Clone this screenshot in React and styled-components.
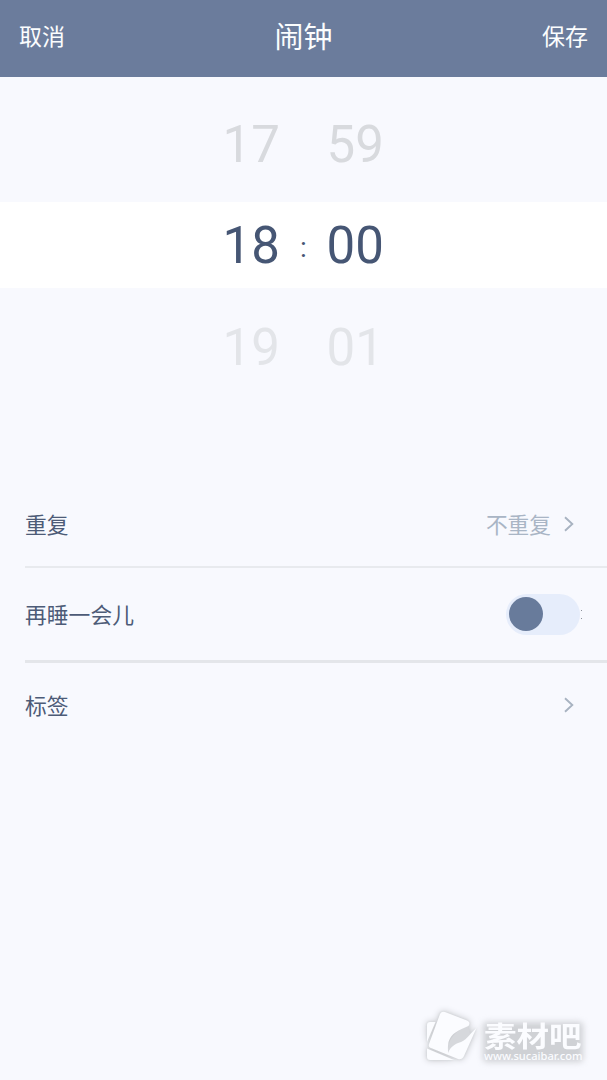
import React, { useState } from 'react';
import styled, { createGlobalStyle } from 'styled-components';

const GlobalStyle = createGlobalStyle`
  * {
    box-sizing: border-box;
  }

  body {
    margin: 0;
    background: #f8f9fe;
    font-family: "Noto Sans CJK SC", sans-serif;
  }
`;

const Page = styled.div`
  display: flex;
  flex-direction: column;
  height: 1080px;
  position: relative;
  overflow: hidden;
  background: #f8f9fe;
`;

// Header
const Header = styled.header`
  display: grid;
  grid-template-columns: 1fr auto 1fr;
  align-items: center;
  height: 77px;
  padding: 0 19px 7px;
  background: #6b7c9c;
  color: #fbfdfe;
`;

const HeaderButton = styled.button`
  justify-self: ${props => props.$side};
  padding: 0;
  border: none;
  background: none;
  color: inherit;
  font-family: inherit;
  font-weight: 400;
  font-size: 23px;
  line-height: 34px;
  cursor: pointer;
`;

const Title = styled.h1`
  margin: 0;
  font-weight: 400;
  font-size: 29px;
  line-height: 42px;
`;

// Time picker
const Picker = styled.div`
  display: flex;
  flex-direction: column;
  height: 405px;
`;

const PickerRow = styled.div`
  display: grid;
  grid-template-columns: 58px 46px 58px;
  justify-content: center;
  align-items: center;
  height: ${props => props.$height}px;
  padding-top: ${props => props.$shift || 0}px;
  background: ${props => (props.$active ? '#ffffff' : 'transparent')};
  color: ${props => props.$color};
  font-family: Roboto, sans-serif;
  font-size: 51px;
  line-height: 60px;
`;

const Colon = styled.span`
  padding-top: 4px;
  text-align: center;
  font-size: 28px;
`;

// Settings list
const Row = styled.div`
  display: flex;
  align-items: center;
  justify-content: space-between;
  height: ${props => props.$height}px;
  margin-left: 25px;
  padding-right: ${props => props.$right || 33}px;
  border-bottom: ${props => props.$line || 0}px solid ${props => props.$lineColor || 'transparent'};
`;

const Label = styled.span`
  color: #4d5b77;
  font-weight: 400;
  font-size: 21.8px;
  line-height: 32px;
`;

const Value = styled.span`
  display: flex;
  align-items: center;
  gap: 13px;
  color: #a9b5c5;
  font-weight: 400;
  font-size: 21.7px;
  line-height: 32px;
`;

const Switch = styled.button`
  display: flex;
  align-items: center;
  justify-content: ${props => (props.$on ? 'flex-end' : 'flex-start')};
  width: 74px;
  height: 41px;
  padding: 0 3px;
  border: none;
  border-radius: 21px;
  background: #e6edfb;
  cursor: pointer;
`;

const Knob = styled.span`
  width: 34px;
  height: 34px;
  border-radius: 50%;
  background: #687b9b;
`;

const SwitchArea = styled.div`
  display: flex;
  align-items: center;
  gap: 1px;
`;

const Specks = styled.span`
  display: flex;
  flex-direction: column;
  gap: 7px;
  width: 1px;

  &::before,
  &::after {
    content: "";
    height: 1px;
    background: #8d929b;
  }
`;

// Site mark over the bottom right corner
const Watermark = styled.div`
  position: absolute;
  left: 418px;
  top: 1004px;
  display: flex;
  color: #fbfcff;
`;

const MarkText = styled.div`
  display: flex;
  flex-direction: column;
  position: relative;
  padding-top: 17px;

  /* soft grey glow behind the name and the address */
  &::before {
    content: "";
    position: absolute;
    inset: 18px -1px 8px -1px;
    border-radius: 4px;
    background: #cfd1d5;
    filter: blur(3px);
  }
`;

const MarkName = styled.span`
  position: relative;
  font-size: 32.5px;
  font-weight: 700;
  line-height: 27px;
  transform: scaleY(0.88);
`;

const MarkUrl = styled.span`
  position: relative;
  margin-top: 2px;
  font-family: "Noto Sans", sans-serif;
  font-size: 11.1px;
  font-weight: 500;
  line-height: 12px;
`;

const MarkLogo = styled.svg`
  width: 66px;
  height: 66px;
  filter: drop-shadow(0 0 1px #cfd1d5) drop-shadow(0 0 3px #c4c6ca);
`;

const Chevron = () => (
  <svg width="10" height="16" viewBox="0 0 10 16" fill="none">
    <path d="M1 1.2 8.3 8 1 14.8" stroke="#a8b3c1" strokeWidth="1.9" />
  </svg>
);

const Logo = () => (
  <MarkLogo viewBox="0 0 66 66" fill="#fbfcff">
    <path d="M12 18h5.500L9 38V21q0-3 3-3z" />
    <path d="M9 44.500 36 56H12q-3 0-3-3z" />
    {/* shading of the lifted page corner */}
    <path d="M50 22C40 26 29 33 30 49c7-10 18-8 22-19z" fill="#d6d8dc" />
    <path d="M22 10q1.500-3 5-2l22 8.500q4 1.500 1.500 5.500C41 26 33 29 30.500 38q-1 5-.5 11c3-7 7-9 13-11 7-3 9-9 15.500-14L46 52q-2 4-6 3L13 44q-3-1-2-4z" />
  </MarkLogo>
);

const App = () => {
  const [snooze, setSnooze] = useState(false);

  return (
    <>
      <GlobalStyle />
      <Page>
        <Header>
          <HeaderButton $side="start">取消</HeaderButton>
          <Title>闹钟</Title>
          <HeaderButton $side="end">保存</HeaderButton>
        </Header>

        <Picker>
          <PickerRow $height={125} $shift={11} $color="#d8dade">
            <span>17</span>
            <span />
            <span>59</span>
          </PickerRow>
          <PickerRow $active $height={86} $shift={2} $color="#465674">
            <span>18</span>
            <Colon>:</Colon>
            <span>00</span>
          </PickerRow>
          <PickerRow $height={117} $shift={2} $color="#e3e5e9">
            <span>19</span>
            <span />
            <span>01</span>
          </PickerRow>
        </Picker>

        <Row $height={86} $line={2} $lineColor="#e8eaee">
          <Label>重复</Label>
          <Value>
            不重复
            <Chevron />
          </Value>
        </Row>
        <Row $height={95} $line={3} $lineColor="#e4e6ea" $right={25}>
          <Label>再睡一会儿</Label>
          <SwitchArea>
            <Switch $on={snooze} onClick={() => setSnooze(!snooze)}>
              <Knob />
            </Switch>
            <Specks />
          </SwitchArea>
        </Row>
        <Row $height={84}>
          <Label>标签</Label>
          <Value>
            <Chevron />
          </Value>
        </Row>

        <Watermark>
          <Logo />
          <MarkText>
            <MarkName>素材吧</MarkName>
            <MarkUrl>www.sucaibar.com</MarkUrl>
          </MarkText>
        </Watermark>
      </Page>
    </>
  );
};

export default App;
